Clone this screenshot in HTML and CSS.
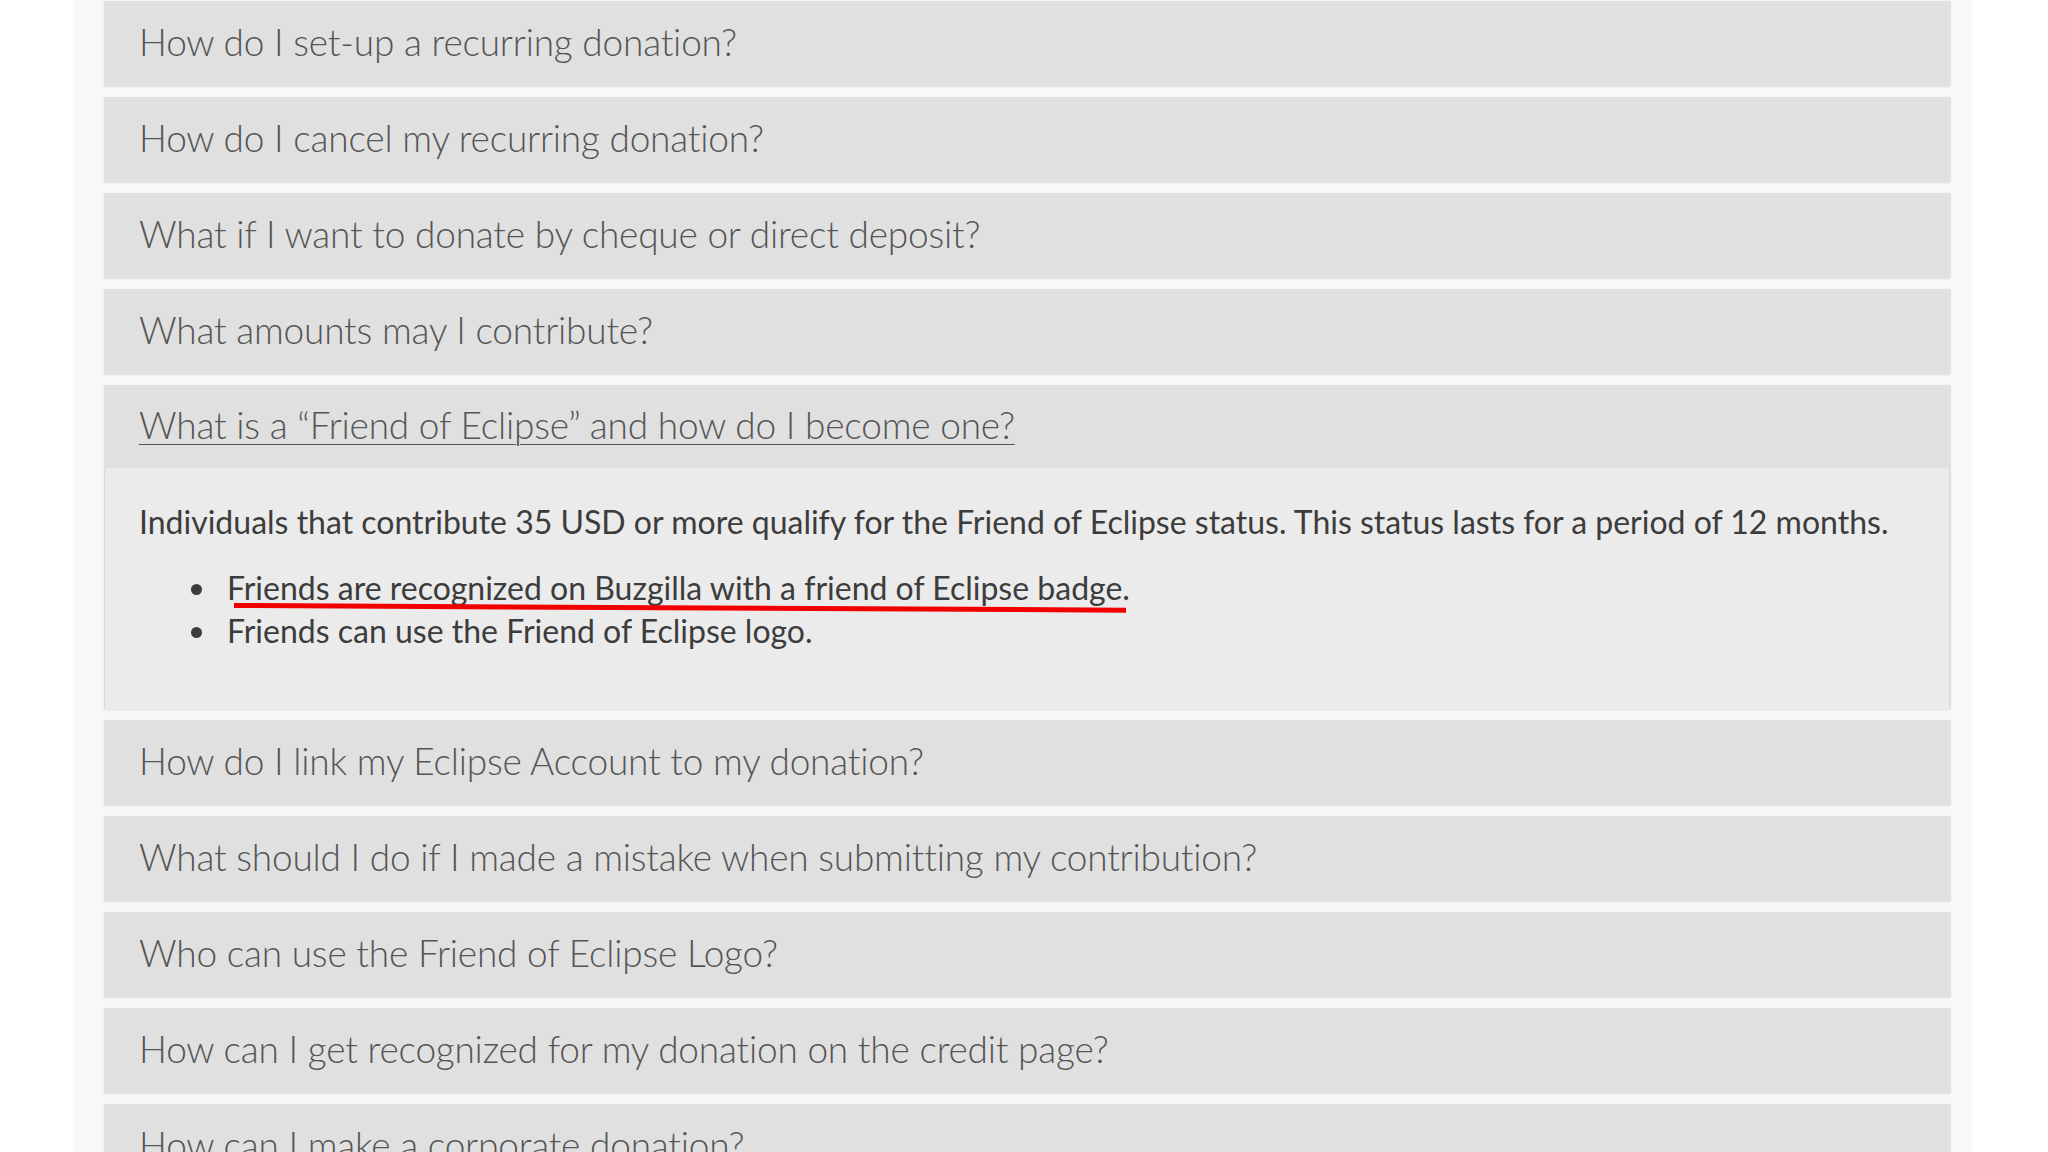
FILE: index.html
```html
<!DOCTYPE html>
<html lang="en">
<head>
<meta charset="utf-8">
<title>FAQ</title>
<link rel="stylesheet" href="styles.css">
</head>
<body>
<div class="page">
  <div class="faq">
    <div class="item"><div class="q">How do I set-up a recurring donation?</div></div>
    <div class="item"><div class="q">How do I cancel my recurring donation?</div></div>
    <div class="item"><div class="q">What if I want to donate by cheque or direct deposit?</div></div>
    <div class="item"><div class="q">What amounts may I contribute?</div></div>
    <div class="item open">
      <div class="q"><span class="q-link">What is a “Friend of Eclipse” and how do I become one?</span></div>
      <div class="answer">
        <p>Individuals that contribute 35 USD or more qualify for the Friend of Eclipse status. This status lasts for a period of 12 months.</p>
        <ul>
          <li><span class="marked">Friends are recognized on Buzgilla with a friend of Eclipse badge</span>.</li>
          <li>Friends can use the Friend of Eclipse logo.</li>
        </ul>
      </div>
    </div>
    <div class="item"><div class="q">How do I link my Eclipse Account to my donation?</div></div>
    <div class="item"><div class="q">What should I do if I made a mistake when submitting my contribution?</div></div>
    <div class="item"><div class="q">Who can use the Friend of Eclipse Logo?</div></div>
    <div class="item"><div class="q">How can I get recognized for my donation on the credit page?</div></div>
    <div class="item"><div class="q">How can I make a corporate donation?</div></div>
  </div>
</div>
</body>
</html>
```

FILE: styles.css
```css
html, body {
  margin: 0;
  padding: 0;
  background: #ffffff;
  height: 100%;
  overflow: hidden;
}

.page {
  margin-left: 73px;
  width: 1899px;
  min-height: 1152px;
  background: #f8f8f8;
  padding: 1px 22px 0 31px;
  box-sizing: border-box;
}

.faq {
  display: flex;
  flex-direction: column;
  gap: 11px;
}

.item {
  background: #e0e0e0;
  box-shadow: 0 1px 2px rgba(0, 0, 0, 0.10), 1px 0 1px rgba(0, 0, 0, 0.05);
}

.q {
  height: 85px;
  display: flex;
  align-items: center;
  padding: 0 35px 5px 35px;
  box-sizing: border-box;
  font-family: Lato, "Open Sans", sans-serif;
  font-weight: 300;
  font-size: 37px;
  color: #555555;
  letter-spacing: -0.2px;
}

.open .q {
  height: 83px;
}

.q-link {
  text-decoration: underline;
  text-decoration-thickness: 1px;
  text-underline-offset: 5px;
}

.answer {
  background: #ebebeb;
  border-left: 1px solid #dcdcdc;
  border-right: 1px solid #dcdcdc;
  padding: 32px 34px 57px 34px;
  font-family: Lato, "Open Sans", sans-serif;
  font-weight: 400;
  font-size: 32px;
  line-height: 43px;
  color: #3c3c3c;
}

.answer p {
  margin: 0 0 23px 0;
}

.answer ul {
  margin: 0;
  padding-left: 80px;
}

.answer li {
  padding-left: 8px;
}

.marked {
  position: relative;
}

.marked::after {
  content: "";
  position: absolute;
  left: 7px;
  right: -4px;
  bottom: -1px;
  height: 5px;
  background: #f20000;
  transform: rotate(0.3deg);
  transform-origin: left center;
}
```
